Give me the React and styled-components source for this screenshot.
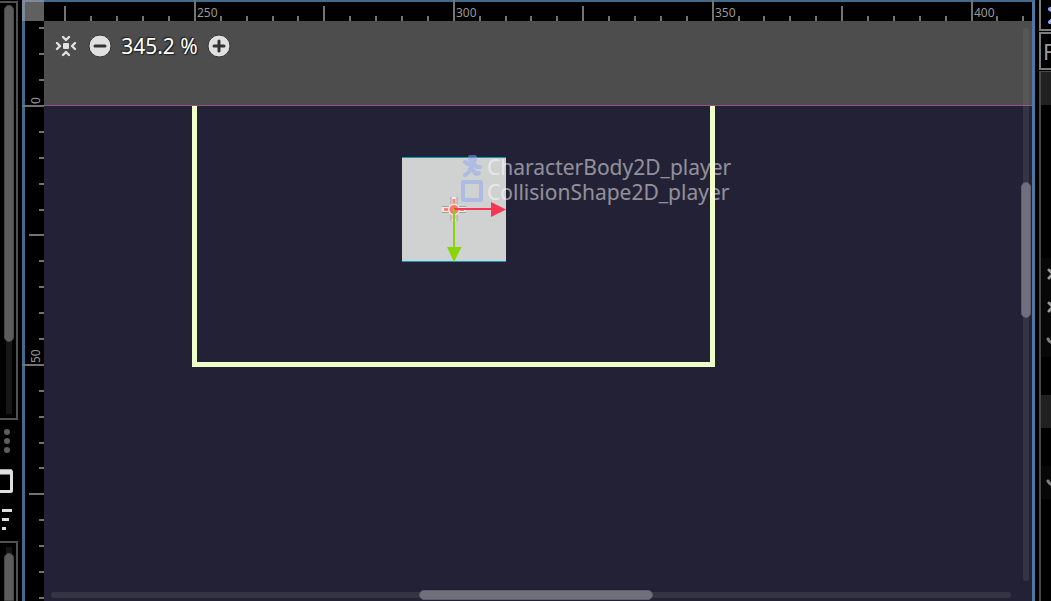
import React from 'react';
import styled, { createGlobalStyle } from 'styled-components';

const Global = createGlobalStyle`
  * { box-sizing: border-box; }
  html, body, #root { height: 100%; margin: 0; }
  body { background: #000; color: #e0e0e0; font-family: "Noto Sans", sans-serif; overflow: hidden; }
`;

const Editor = styled.div`
  display: grid;
  grid-template-columns: 18px minmax(0, 1fr) 12px;
  column-gap: 4px;
  height: 100vh;
  overflow: hidden;
`;

const LeftDock = styled.aside`
  display: flex;
  flex-direction: column;
  height: 100vh;
  padding-top: 1px;
  overflow: hidden;
`;

const ScrollPanel = styled.div`
  display: flex;
  flex: ${p => (p.$open ? '0 0 10%' : '1 1 0')};
  justify-content: flex-end;
  border: 2px solid #525252;
  border-left: 0;
  border-bottom-width: ${p => (p.$open ? 0 : 2)}px;
  padding: ${p => (p.$open ? '4px 2px 0 0' : '2px 2px 4px 0')};
`;

const Track = styled.div`
  width: 10px;
  height: 100%;
  padding-top: ${p => p.$lead || 0}px;
  background: linear-gradient(#161616, #161616) center / 6px 100% no-repeat;
`;

const Thumb = styled.div`
  height: ${p => p.$size};
  border: 1px solid #474747;
  border-radius: ${p => (p.$open ? '5px 5px 0 0' : '5px')};
  background: #5c5c5c;
`;

const DockTools = styled.div`
  display: flex;
  flex-direction: column;
  height: 121px;
  flex: none;
`;

const ToolButton = styled.button`
  display: flex;
  width: 18px;
  height: 40px;
  padding: 0;
  border: 0;
  background: none;
`;

const Viewport = styled.main`
  position: relative;
  display: grid;
  grid-template-columns: 22px minmax(0, 1fr);
  grid-template-rows: 21px minmax(0, 1fr);
  height: 100vh;
  padding-right: 3px;
  overflow: hidden;
  &::before {
    content: "";
    position: absolute;
    inset: 0;
    border: solid #416a8f;
    border-right-color: #4d78a3;
    border-width: 2px 3px 0;
  }
`;

const RulerCorner = styled.div`
  position: relative;
  background: rgba(160, 160, 160, 0.6);
`;

const Ruler = styled.div`
  position: relative;
  overflow: hidden;
`;

const RulerTicks = styled.svg`
  display: block;
  width: 100%;
  height: 100%;
`;

const RulerLabel = styled.span`
  position: absolute;
  font-size: 12px;
  line-height: 16px;
  color: #999;
  left: ${p => (p.$vertical ? 6 : p.$at)}px;
  top: ${p => (p.$vertical ? p.$at : 5)}px;
  ${p => p.$vertical && 'writing-mode: vertical-rl; transform: translateY(-100%) rotate(180deg);'}
`;

const Canvas = styled.section`
  position: relative;
  overflow: hidden;
  background: #232135;
`;

const Outside = styled.div`
  height: 85px;
  padding: 11px 8px;
  background: #4d4d4d;
  border-bottom: 1px solid #94508f;
`;

const ZoomBar = styled.div`
  display: flex;
  align-items: center;
  height: 28px;
`;

const IconButton = styled.button`
  display: flex;
  width: ${p => p.$width || 24}px;
  height: 24px;
  padding: 0;
  border: 0;
  background: none;
`;

const ZoomValue = styled.button`
  width: 95px;
  padding: 0;
  border: 0;
  background: none;
  color: #fff;
  font: 21px/28px "Noto Sans", sans-serif;
  text-align: center;
  text-shadow: 0 0 2px #222, 1px 1px 1px #222, -1px -1px 1px #222;
`;

const Scene = styled.svg`
  position: absolute;
  left: 0;
  top: 0;
  width: 100%;
  height: 100%;
  pointer-events: none;
`;

const NodeLabels = styled.ul`
  position: absolute;
  left: 416px;
  top: 134px;
  margin: 0;
  padding: 0;
  list-style: none;
  opacity: 0.5;
`;

const NodeLabel = styled.li`
  display: flex;
  align-items: flex-start;
  gap: 3px;
  height: 25px;
  font-size: 21px;
  line-height: 25px;
  color: #fff;
  white-space: nowrap;
`;

const NodeIcon = styled.svg.attrs({ width: 24, height: 24, viewBox: '0 1 24 24' })`
  flex: none;
  overflow: visible;
  fill: none;
  stroke: #8da5f3;
  stroke-width: 4;
  stroke-linecap: round;
  stroke-linejoin: round;
`;

const CanvasTrack = styled.div`
  position: absolute;
  border-radius: 3px;
  background: rgba(128, 128, 128, 0.2);
  ${p => (p.$vertical
    ? 'right: 3px; top: 7px; bottom: 20px; width: 6px;'
    : 'left: 7px; right: 21px; bottom: 3px; height: 6px;')}
`;

const CanvasThumb = styled.div`
  position: absolute;
  border: 1px solid #5f5d6b;
  border-radius: 5px;
  background: #716f7c;
  ${p => (p.$vertical
    ? 'left: -2px; width: 10px; top: 27.8%; height: 24.6%;'
    : 'top: -2px; height: 10px; left: 38.3%; width: 24.4%;')}
`;

const RightDock = styled.aside`
  height: 100vh;
  overflow: hidden;
`;

const DockCell = styled.div`
  height: ${p => p.$height}px;
  margin-bottom: ${p => p.$gap}px;
  border: 2px solid #7d7d7d;
  border-right: 0;
  border-top-width: ${p => (p.$first ? 0 : 2)}px;
  overflow: hidden;
  color: #999;
  font-size: 22px;
  line-height: 35px;
  padding-left: ${p => p.$pad || 0}px;
`;

const Inspector = styled.div`
  height: 100%;
  border-left: 2px solid #484848;
  border-top: 1px solid #484848;
`;

const InspectorRow = styled.div`
  display: flex;
  align-items: center;
  height: ${p => p.$height}px;
  background: ${p => p.$tone || 'transparent'};
`;

const STEP = 25.89;

function ticks(origin, from, to) {
  const list = [];
  for (let n = from; n <= to; n += 1) {
    const size = n % 10 === 0 ? 22 : n % 5 === 0 ? 15 : 5;
    list.push({ at: Math.round(origin + n * STEP) - 1, size });
  }
  return list;
}

const columns = ticks(150.9, -6, 80);
const rows = ticks(85, -4, 80);

function Runner() {
  return (
    <NodeIcon>
      <path d="M10 3 H15 V6 H10 Z" fill="#8da5f3" />
      <path d="M5 8 L8 10 L13 9 L17 13 H20 M13 10 L10 15 M12 11 L12 16 M10 15 L9 18 L5 21 M12 15 L16 20 L19 19" />
    </NodeIcon>
  );
}

function CloseMark() {
  return (
    <svg width="10" height="14" viewBox="0 0 10 14" fill="none" stroke="#999" strokeWidth="3" strokeLinecap="round">
      <path d="M8 2 L12 6 M8 10 L12 6" />
    </svg>
  );
}

function CheckMark() {
  return (
    <svg width="10" height="14" viewBox="0 0 10 14" fill="none" stroke="#808080" strokeWidth="3" strokeLinecap="round">
      <path d="M7 5 Q8 8 12 9" />
    </svg>
  );
}

export default function App() {
  return (
    <>
      <Global />
      <Editor>
        <LeftDock>
          <ScrollPanel>
            <Track><Thumb $size="82.4%" /></Track>
          </ScrollPanel>
          <DockTools>
            <ToolButton aria-label="More options">
              <svg width="18" height="40" fill="#5e5e5e">
                <circle cx="7" cy="12" r="3" /><circle cx="7" cy="21" r="3" /><circle cx="7" cy="30" r="3" />
              </svg>
            </ToolButton>
            <ToolButton aria-label="Panel">
              <svg width="18" height="40" fill="none" stroke="#e0e0e0">
                <rect x="-8" y="11" width="19.5" height="20.5" rx="1" strokeWidth="3" />
                <path d="M-2 12 H12" strokeWidth="5" />
              </svg>
            </ToolButton>
            <ToolButton aria-label="Sort">
              <svg width="18" height="40" fill="#e0e0e0">
                <rect x="2" y="9" width="10" height="3" /><rect x="2" y="18" width="7" height="3" /><rect x="2" y="27" width="4" height="3" />
              </svg>
            </ToolButton>
          </DockTools>
          <ScrollPanel $open>
            <Track $lead={6}><Thumb $size="100%" $open /></Track>
          </ScrollPanel>
        </LeftDock>

        <Viewport>
          <RulerCorner />
          <Ruler>
            <RulerTicks fill="#737373">
              {columns.map(t => <rect key={t.at} x={t.at} y={21 - t.size} width="2" height={t.size} />)}
            </RulerTicks>
            {[250, 300, 350, 400].map((n, i) => (
              <RulerLabel key={n} $at={Math.round(153 + i * 258.9)}>{n}</RulerLabel>
            ))}
          </Ruler>
          <Ruler>
            <RulerTicks fill="#737373">
              {rows.map(t => <rect key={t.at} x={22 - t.size} y={t.at} width={t.size} height="2" />)}
            </RulerTicks>
            {[0, 50].map((n, i) => (
              <RulerLabel key={n} $vertical $at={83 + i * 259}>{n}</RulerLabel>
            ))}
          </Ruler>
          <Canvas>
            <Outside>
              <ZoomBar>
                <IconButton $width={36} aria-label="Center view">
                  <svg width="28" height="24" viewBox="0 0 28 24" fill="none" stroke="#e0e0e0" strokeWidth="2.4" strokeLinecap="round" strokeLinejoin="round">
                    <rect x="11" y="9" width="6" height="6" rx="1" fill="#e0e0e0" stroke="none" />
                    <path d="M11 3 L14 6 L17 3 M11 21 L14 18 L17 21 M5 9 L8 12 L5 15 M23 9 L20 12 L23 15" />
                  </svg>
                </IconButton>
                <IconButton aria-label="Zoom out">
                  <svg width="24" height="24" viewBox="0 0 24 24">
                    <circle cx="12" cy="12" r="11" fill="#e0e0e0" stroke="#333" />
                    <path d="M7 12 H17" stroke="#333" strokeWidth="3" strokeLinecap="round" />
                  </svg>
                </IconButton>
                <ZoomValue>345.2 %</ZoomValue>
                <IconButton aria-label="Zoom in">
                  <svg width="24" height="24" viewBox="0 0 24 24">
                    <circle cx="12" cy="12" r="11" fill="#e0e0e0" stroke="#333" />
                    <path d="M7 12 H17 M12 7 V17" stroke="#333" strokeWidth="3" strokeLinecap="round" />
                  </svg>
                </IconButton>
              </ZoomBar>
            </Outside>
            <Scene>
              <path d="M150.5 85 V343.5 H668.5 V85" fill="none" stroke="#efffc8" strokeWidth="5" />
              <rect x="358" y="136" width="104" height="105" fill="#d0d2d1" />
              <path d="M358 136.5 H462 M358 240.5 H462" stroke="#0d9bb0" />
            </Scene>
            <NodeLabels>
              <NodeLabel><Runner />CharacterBody2D_player</NodeLabel>
              <NodeLabel>
                <NodeIcon><rect x="3" y="3" width="18" height="18" rx="1" /></NodeIcon>
                CollisionShape2D_player
              </NodeLabel>
            </NodeLabels>
            <Scene>
              <path d="M410 176 V200 M398 188.5 H422" stroke="#9fa0a0" strokeWidth="7" />
              <path d="M410 176 V200 M398 188.5 H422" stroke="#eeeae9" strokeWidth="5" />
              <path d="M410 178 V184 M410 193 V198 M400 188.5 H405 M415 188.5 H420" stroke="#ff8672" strokeWidth="3" />
              <circle cx="410" cy="188.5" r="6" fill="#eeeae9" />
              <circle cx="410" cy="188.5" r="4.5" fill="#ff786b" />
              <path d="M410 188 H448" stroke="#f63652" strokeWidth="2" />
              <path d="M447 181 L462 188.5 L447 196 Z" fill="#f63652" />
              <path d="M410 188 V227" stroke="#87d603" strokeWidth="2" />
              <path d="M403 226 H417.5 L410 241 Z" fill="#87d603" />
            </Scene>
            <CanvasTrack $vertical><CanvasThumb $vertical /></CanvasTrack>
            <CanvasTrack><CanvasThumb /></CanvasTrack>
          </Canvas>
        </Viewport>

        <RightDock>
          <DockCell $first $height={31} $gap={1} $pad={4}><Runner /></DockCell>
          <DockCell $height={38} $gap={1} $pad={2}>F</DockCell>
          <Inspector>
            <InspectorRow $height={33} $tone="#202020" />
            <InspectorRow $height={153} />
            <InspectorRow $height={33} $tone="#070707"><CloseMark /></InspectorRow>
            <InspectorRow $height={33} $tone="#070707"><CloseMark /></InspectorRow>
            <InspectorRow $height={33} $tone="#070707"><CheckMark /></InspectorRow>
            <InspectorRow $height={38} />
            <InspectorRow $height={33} $tone="#202020" />
            <InspectorRow $height={38} />
            <InspectorRow $height={33} $tone="#070707"><CheckMark /></InspectorRow>
          </Inspector>
        </RightDock>
      </Editor>
    </>
  );
}
